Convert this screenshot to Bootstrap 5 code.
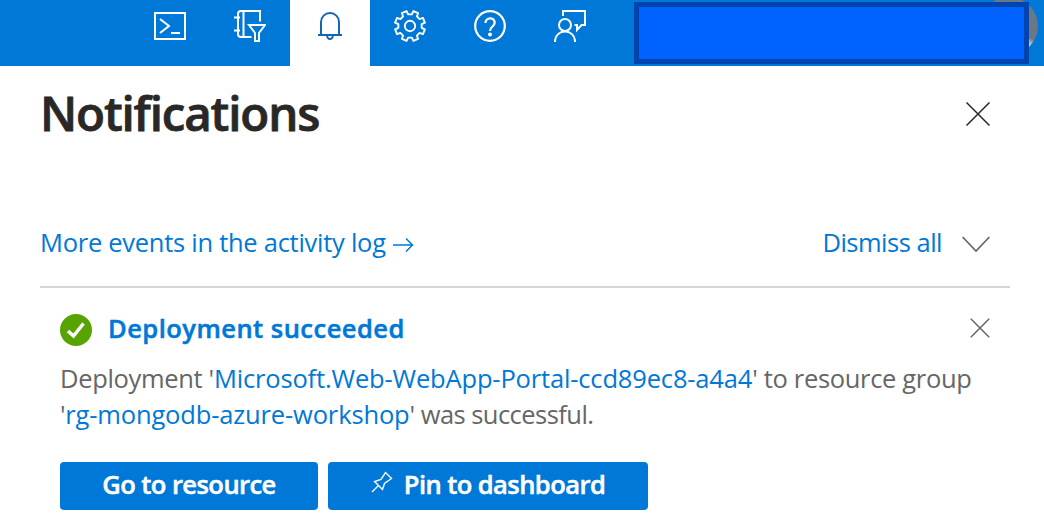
<!DOCTYPE html>
<html lang="en">
<head>
<meta charset="utf-8">
<meta name="viewport" content="width=device-width, initial-scale=1">
<title>Notifications</title>
<link href="https://cdn.jsdelivr.net/npm/bootstrap@5.3.0/dist/css/bootstrap.min.css" rel="stylesheet">
<style>
  body { font-family: "Open Sans", "Noto Sans", sans-serif; font-size: 25.5px; line-height: 36px; color: #666; overflow: hidden; }
  svg { display: block; flex: none; fill: none; stroke: currentColor; }
  a { color: #0078d7; text-decoration: none; }
  .topbar { height: 66px; background: #0078d7; padding-left: 130px; }
  .tool { display: flex; align-items: flex-start; width: 80px; height: 66px; padding: 10px 24px; color: #fff; background: none; border: 0; }
  .tool.active { background: #fff; color: #1565b5; }
  .account { width: 395px; height: 62px; margin: 2px 0 0 24px; background: #0062ff; border: 5px solid #0044ae; position: relative; z-index: 1; }
  .avatar { width: 58px; height: 58px; right: 6px; top: -3px; background: radial-gradient(circle at 46px 52px, #d8d8dc 5px, #6c7786 12px); }
  .panel { padding: 18px 34px 0 40px; }
  .title { font-size: 47.5px; line-height: 58px; height: 60px; font-weight: 600; color: #292827; letter-spacing: -1.15px; -webkit-text-stroke: .8px; }
  .close-panel { color: #292827; margin: 18px 20px 0 0; }
  .actions { margin-top: 80px; height: 64px; border-bottom: 2px solid #d6d6d6; padding-right: 20px; }
  .more { letter-spacing: -.27px; }
  .dismiss { letter-spacing: -.5px; }
  .notice { padding: 22px 20px 0 20px; }
  .notice-title { font-weight: 600; letter-spacing: .48px; -webkit-text-stroke: .5px; }
  .message { margin-top: 14px; letter-spacing: -.33px; }
  .message a { letter-spacing: -.16px; }
  .message .rg { letter-spacing: -.15px; }
  .tail { letter-spacing: -.54px; }
  .btn-azure { height: 48px; background: #0078d7; color: #fff; border: 0; border-radius: 4px; font-size: 25.5px; font-weight: 600; line-height: 36px; letter-spacing: -.55px; -webkit-text-stroke: .5px; padding: 0 0 4px; }
  .go { width: 258px; } .pin { width: 320px; }
</style>
</head>
<body class="bg-white">
<nav class="topbar d-flex position-relative">
  <button class="tool" aria-label="Cloud Shell"><svg width="32" height="32" stroke-width="2"><path d="M1 3H31V29H1ZM6 9l9 7-9 7M17 23h9"/></svg></button>
  <button class="tool" aria-label="Directory and filter"><svg width="32" height="32" stroke-width="2"><path d="M26 11.500V1H7Q4 1 4 4V24Q4 27 7 27H17.500M9.500 1V27M0 7.500H6M0 20.500H6" /><path d="M15 15H31L25 23V31H21V23Z"/></svg></button>
  <button class="tool active" aria-label="Notifications"><svg width="32" height="32" stroke-width="2"><path d="M4 25H28M7 25V12a9 9 0 0 1 18 0V25M13 25a3 4 0 0 0 6 0"/></svg></button>
  <button class="tool" aria-label="Settings"><svg width="32" height="32" stroke-width="1.900"><g transform="translate(16 16)"><path stroke-linejoin="round" d="M1.850-11.650 3.440-14.900 8.100-12.970 6.940-9.550 9.550-6.940 12.970-8.100 14.900-3.440 11.650-1.850V1.850L14.900 3.440 12.970 8.100 9.550 6.940 6.940 9.550 8.100 12.970 3.440 14.900 1.850 11.650H-1.850L-3.440 14.900-8.100 12.970-6.940 9.550-9.550 6.940-12.970 8.100-14.900 3.440-11.650 1.850V-1.850L-14.900-3.440-12.970-8.100-9.550-6.940-6.940-9.550-8.100-12.970-3.440-14.900-1.850-11.650Z"/><circle r="5.200"/></g></svg></button>
  <button class="tool" aria-label="Help"><svg width="32" height="32" stroke-width="2.200"><circle cx="16" cy="16" r="14.800"/><path d="M11.500 13c0-6 9.200-6 9.200-.5 0 4-4.700 4-4.700 8.500"/><circle cx="16" cy="24.500" r="2" fill="currentColor" stroke="none"/></svg></button>
  <button class="tool" aria-label="Feedback"><svg width="32" height="32" stroke-width="2"><circle cx="11" cy="15" r="6"/><path d="M1 32C1 18 21 18 21 32M9 6V1H31V15H27.500L23 20V15H20.500"/></svg></button>
  <div class="account"></div>
  <div class="avatar position-absolute rounded-circle"></div>
</nav>
<main class="panel">
  <header class="d-flex justify-content-between align-items-start">
    <h1 class="title m-0">Notifications</h1>
    <svg class="close-panel" width="24" height="24" stroke-width="1.500"><path d="M.5.500 23.500 23.500M23.500.500.500 23.500"/></svg>
  </header>
  <div class="actions d-flex justify-content-between align-items-start">
    <a href="#" class="more d-flex"><span>More events in the activity log</span><svg width="22" height="16" stroke-width="1.500" style="margin:13px 0 0 7px"><path d="M0 8H19M13 1.500 19.500 8 13 14.500"/></svg></a>
    <div class="d-flex"><a href="#" class="dismiss">Dismiss all</a><svg width="28" height="18" stroke-width="1.700" style="margin:12px 0 0 20px"><path d="M.6 1 14 15 27.400 1"/></svg></div>
  </div>
  <section class="notice">
    <div class="d-flex align-items-center">
      <svg width="32" height="32" class="mt-1"><circle cx="16" cy="16" r="16" fill="#57a300" stroke="none"/><path d="M8 17 13.500 22 23.500 9.500" stroke="#fff" stroke-width="3.500"/></svg>
      <a href="#" class="notice-title ms-3">Deployment succeeded</a>
      <svg class="ms-auto" width="20" height="20" stroke-width="1.500"><path d="M.8.800 19.200 19.200M19.200.800.800 19.200"/></svg>
    </div>
    <p class="message mb-0 text-nowrap">Deployment '<a href="#">Microsoft.Web-WebApp-Portal-ccd89ec8-a4a4</a>' to resource group<br>'<a href="#" class="rg">rg-mongodb-azure-workshop</a><span class="tail">' was successful.</span></p>
    <div class="d-flex" style="gap:10px;margin-top:30px">
      <button class="btn btn-azure go">Go to resource</button>
      <button class="btn btn-azure pin d-flex justify-content-center align-items-center"><svg width="22" height="22" stroke-width="1.400" style="margin:0 11px 5px 0"><path d="M1 21 7.500 14.500M3.500 10.500 11.500 18.500 13.500 12.500 20.500 7.500 14.500 1.500 10 8.500Z"/></svg><span>Pin to dashboard</span></button>
    </div>
  </section>
</main>
<script src="https://cdn.jsdelivr.net/npm/bootstrap@5.3.0/dist/js/bootstrap.bundle.min.js"></script>
</body>
</html>
